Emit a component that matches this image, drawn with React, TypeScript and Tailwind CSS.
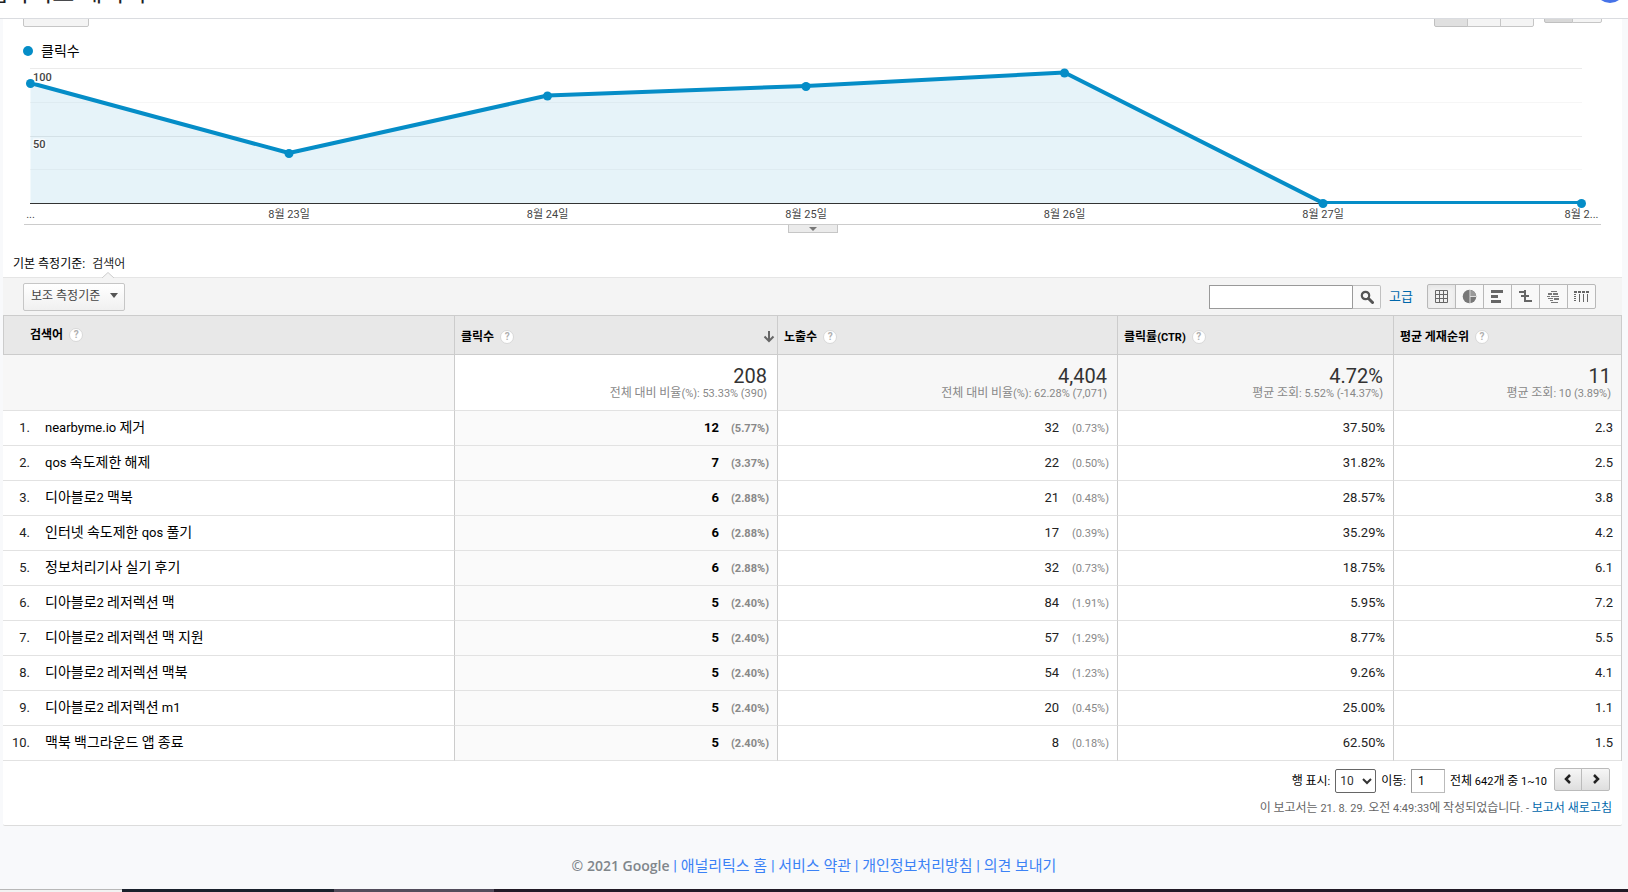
import React, { useState } from 'react';

type Keyword = {
  term: string;
  clicks: number;
  clicksPct: string;
  impressions: number;
  impressionsPct: string;
  ctr: string;
  position: string;
};

const keywords: Keyword[] = [
  { term: 'nearbyme.io 제거', clicks: 12, clicksPct: '5.77%', impressions: 32, impressionsPct: '0.73%', ctr: '37.50%', position: '2.3' },
  { term: 'qos 속도제한 해제', clicks: 7, clicksPct: '3.37%', impressions: 22, impressionsPct: '0.50%', ctr: '31.82%', position: '2.5' },
  { term: '디아블로2 맥북', clicks: 6, clicksPct: '2.88%', impressions: 21, impressionsPct: '0.48%', ctr: '28.57%', position: '3.8' },
  { term: '인터넷 속도제한 qos 풀기', clicks: 6, clicksPct: '2.88%', impressions: 17, impressionsPct: '0.39%', ctr: '35.29%', position: '4.2' },
  { term: '정보처리기사 실기 후기', clicks: 6, clicksPct: '2.88%', impressions: 32, impressionsPct: '0.73%', ctr: '18.75%', position: '6.1' },
  { term: '디아블로2 레저렉션 맥', clicks: 5, clicksPct: '2.40%', impressions: 84, impressionsPct: '1.91%', ctr: '5.95%', position: '7.2' },
  { term: '디아블로2 레저렉션 맥 지원', clicks: 5, clicksPct: '2.40%', impressions: 57, impressionsPct: '1.29%', ctr: '8.77%', position: '5.5' },
  { term: '디아블로2 레저렉션 맥북', clicks: 5, clicksPct: '2.40%', impressions: 54, impressionsPct: '1.23%', ctr: '9.26%', position: '4.1' },
  { term: '디아블로2 레저렉션 m1', clicks: 5, clicksPct: '2.40%', impressions: 20, impressionsPct: '0.45%', ctr: '25.00%', position: '1.1' },
  { term: '맥북 백그라운드 앱 종료', clicks: 5, clicksPct: '2.40%', impressions: 8, impressionsPct: '0.18%', ctr: '62.50%', position: '1.5' },
];

const points = [
  { x: 30.5, y: 83, label: '...' },
  { x: 289, y: 153, label: '8월 23일' },
  { x: 547.5, y: 95.5, label: '8월 24일' },
  { x: 806, y: 86, label: '8월 25일' },
  { x: 1064.5, y: 72.5, label: '8월 26일' },
  { x: 1323, y: 203, label: '8월 27일' },
  { x: 1581.5, y: 203, label: '8월 2...' },
];

const footerLinks = ['애널리틱스 홈', '서비스 약관', '개인정보처리방침', '의견 보내기'];

// Hangul is set one step larger than the Latin text beside it
const Mixed: React.FC<{ text: string; size?: 'sm' | 'md' }> = ({ text, size = 'sm' }) => (
  <span className={size === 'sm' ? 'text-[11px]' : 'text-[13px]'}>
    {text.split(/([가-힣]+)/).map((part, i) =>
      i % 2 ? (
        <span key={i} className={size === 'sm' ? 'text-[12px]' : 'text-[14px]'}>{part}</span>
      ) : (
        part
      )
    )}
  </span>
);

const Help: React.FC = () => (
  <button
    aria-label="도움말"
    className="ml-1.5 size-3.5 shrink-0 rounded-full border border-[#d8d8d8] bg-white text-[10px] leading-3 font-bold text-[#b0b0b0]"
  >
    ?
  </button>
);

const Chart: React.FC = () => {
  const line = points.map((p) => `${p.x},${p.y}`).join(' ');
  return (
    <svg viewBox="3 63 1619 161" className="block h-auto w-full">
      {[68, 136].map((y) => (
        <rect key={y} x="30" y={y} width="1552" height="1" fill="#ebebeb" />
      ))}
      {[102, 169].map((y) => (
        <rect key={y} x="30" y={y} width="1552" height="1" fill="#f6f6f6" />
      ))}
      <polygon points={`30.5,203 ${line} 1581.5,203`} fill="#058dc7" fillOpacity="0.1" />
      <rect x="30" y="203" width="1552" height="1" fill="#333" />
      <clipPath id="plot">
        <rect x="20" y="63" width="1575" height="141" />
      </clipPath>
      <polyline points={line} fill="none" stroke="#058dc7" strokeWidth="4" strokeLinejoin="round" clipPath="url(#plot)" />
      {points.map((p) => (
        <circle key={p.x} cx={p.x} cy={p.y + 0.5} r="4.5" fill="#058dc7" />
      ))}
      <g fontSize="11" fontWeight="500" fill="#444" stroke="#fff" strokeWidth="3" strokeOpacity="0.7" paintOrder="stroke">
        <text x="33" y="81">100</text>
        <text x="33" y="148">50</text>
      </g>
      <g fill="#444" textAnchor="middle">
        {points.map((p) => (
          <text key={p.x} x={p.x} y="218" fontSize="11">{p.label}</text>
        ))}
      </g>
    </svg>
  );
};

const viewIcons = [
  {
    name: '데이터',
    icon: <path d="M1.5 1.5h12v12h-12zM5.5 1.5v12M9.5 1.5v12M1.5 5.5h12M1.5 9.5h12" fill="none" stroke="#666" />,
  },
  {
    name: '비율',
    icon: (
      <>
        <circle cx="7.5" cy="7.5" r="6.8" fill="#777" />
        <path d="M8.5 1.2a6.500 6.500 0 0 1 5.600 6.300H8.500z" fill="#999" />
        <path d="M8 1v13M8 7.500h6" fill="none" stroke="#ddd" />
      </>
    ),
  },
  { name: '실적', icon: <path d="M1 1h12v3H1zM1 6h7v3H1zM1 11h10v3H1z" fill="#666" /> },
  {
    name: '비교',
    icon: <path d="M1 2h6v2H1zM6 1h2v12H6zM8 6h3v2H8zM3 6h4v2H3zM7 11h7v2H7z" fill="#666" />,
  },
  {
    name: '검색어 구름',
    icon: (
      <path
        d="M5 2h6v1H5zM2 4h4v2H2zM7 4h5v2H7zM1 7h3v1H1zM5 7h8v1H5zM2 9h5v1H2zM8 9h5v2H8zM4 11h3v1H4zM5 13h7v1H5z"
        fill="#777"
      />
    ),
  },
  {
    name: '피봇',
    icon: (
      <path
        d="M0 2h3v2H0zM4 2h3v2H4zM8 2h3v2H8zM12 2h3v2h-3zM0 5h2v1H0zM0 7h2v1H0zM0 9h2v1H0zM0 11h2v1H0zM5 5h1v8H5zM9 5h1v8H9zM13 5h1v8h-1z"
        fill="#666"
      />
    ),
  },
];

const summary = [
  { value: '208', note: '전체 대비 비율(%): 53.33% (390)' },
  { value: '4,404', note: '전체 대비 비율(%): 62.28% (7,071)' },
  { value: '4.72%', note: '평균 조회: 5.52% (-14.37%)' },
  { value: '11', note: '평균 조회: 10 (3.89%)' },
];

const Toolbar: React.FC = () => {
  const [view, setView] = useState(0);
  return (
    <div className="flex h-[38px] items-center border-t border-[#e5e5e5] bg-[#f4f4f4] px-5">
      <button className="flex h-7 items-center rounded-xs border border-[#c6c6c6] bg-linear-to-b from-white to-[#f0f0f0] pr-1.5 pb-0.5 pl-[7px] text-[12px] text-[#444]">
        보조 측정기준
        <svg width="8" height="5" className="ml-2.5">
          <path d="M0 0h8L4 5z" fill="#555" />
        </svg>
      </button>
      <form className="ml-auto flex" onSubmit={(e) => e.preventDefault()}>
        <input aria-label="검색" className="h-6 w-36 border border-[#999] bg-white px-1 text-[12px]" />
        <button aria-label="검색 실행" className="-ml-px flex h-6 w-[29px] items-center justify-center rounded-r-xs border border-[#c0c0c0] border-l-[#999] bg-[#f8f8f8]">
          <svg width="14" height="14" fill="none" stroke="#555">
            <circle cx="5.5" cy="5.5" r="3.7" strokeWidth="2.2" />
            <path d="M8.5 8.5l4 4" strokeWidth="3" strokeLinecap="round" />
          </svg>
        </button>
      </form>
      <a href="#advanced" className="ml-2 text-[13px] text-[#0067ab]">고급</a>
      <div className="mr-[6px] ml-3.5 flex">
        {viewIcons.map((v, i) => (
          <button
            key={v.name}
            aria-label={v.name}
            onClick={() => setView(i)}
            className={`-mr-px flex h-[25px] w-[29px] items-center justify-center border border-[#b8b8b8] first:rounded-l-xs last:mr-0 last:rounded-r-xs ${
              view === i ? 'bg-[#f0f0f0] inset-shadow-sm' : 'bg-[#f8f8f8]'
            }`}
          >
            <svg width="15" height="15">{v.icon}</svg>
          </button>
        ))}
      </div>
    </div>
  );
};

const KeywordTable: React.FC = () => (
  <table className="w-full table-fixed border-separate border-spacing-0 border-r border-[#ccc] text-[13px] text-[#222]">
    <colgroup>
      <col className="w-[451px]" />
      <col className="w-[323px]" />
      <col className="w-[340px]" />
      <col className="w-[276px]" />
      <col className="w-[228px]" />
    </colgroup>
    <thead>
      <tr className="h-10 bg-[#e8e8e8] text-left text-black">
        <th className="border-y border-l border-[#ccc] pl-[26px]">
          <div className="flex items-center"><Mixed text="검색어" /><Help /></div>
        </th>
        <th className="border-y border-l border-[#ccc] pt-1 pl-1.5">
          <div className="flex items-center">
            <Mixed text="클릭수" />
            <Help />
            <svg width="12" height="12" className="mr-0.5 ml-auto" fill="none" stroke="#666" strokeWidth="2">
              <path d="M6 0v10M1.5 5.5L6 10L10.5 5.5" />
            </svg>
          </div>
        </th>
        {['노출수', '클릭률(CTR)', '평균 게재순위'].map((name) => (
          <th key={name} className="border-y border-l border-[#ccc] pt-1 pl-1.5">
            <div className="flex items-center"><Mixed text={name} /><Help /></div>
          </th>
        ))}
      </tr>
    </thead>
    <tbody>
      <tr className="h-14 bg-[#f7f7f7]">
        <td className="border-b border-[#e2e2e2]" />
        {summary.map((s, i) => (
          <td
            key={s.value}
            className={`border-b border-l border-b-[#e2e2e2] border-l-[#ccc] pt-0.5 pr-2.5 text-right ${i === 0 ? 'bg-white' : ''}`}
          >
            <div className="text-[20px] leading-5 text-[#333]">{s.value}</div>
            <div className="leading-3.5 text-[#888]"><Mixed text={s.note} /></div>
          </td>
        ))}
      </tr>
      {keywords.map((k, i) => (
        <tr key={k.term} className="h-[35px]">
          <td className="border-b border-[#e2e2e2] pb-0.5 leading-5">
            <span className="inline-block w-[27px] text-right">{i + 1}.</span>
            <span className="ml-[15px] text-black"><Mixed text={k.term} size="md" /></span>
          </td>
          <td className="border-b border-l border-b-[#e2e2e2] border-l-[#ccc] bg-[#fafafa] pr-2 text-right font-bold text-black">
            {k.clicks}
            <span className="inline-block w-[50px] text-[11px] text-[#888]">({k.clicksPct})</span>
          </td>
          <td className="border-b border-l border-b-[#e2e2e2] border-l-[#ccc] pr-2 text-right">
            {k.impressions}
            <span className="inline-block w-[50px] text-[11px] text-[#888]">({k.impressionsPct})</span>
          </td>
          <td className="border-b border-l border-b-[#e2e2e2] border-l-[#ccc] pr-2 text-right">{k.ctr}</td>
          <td className="border-b border-l border-b-[#e2e2e2] border-l-[#ccc] pr-2 text-right">{k.position}</td>
        </tr>
      ))}
    </tbody>
  </table>
);

const Pagination: React.FC = () => (
  <div className="pt-1.5 pb-1.5 text-black">
    <div className="flex items-center justify-end pr-3">
      <label htmlFor="rows" className="mr-[5px]"><Mixed text="행 표시:" /></label>
      <select id="rows" defaultValue="10" className="mt-0.5 h-6 w-[41px] rounded-xs border border-[#666] bg-white text-[12px] text-[#333]">
        <option>10</option>
        <option>25</option>
      </select>
      <label htmlFor="goto" className="mr-[5px] ml-[5px]"><Mixed text="이동:" /></label>
      <input id="goto" defaultValue="1" className="mt-0.5 h-6 w-[34px] border border-[#bbb] border-t-[#999] border-l-[#999] bg-white px-1.5 text-[12px]" />
      <span className="ml-[5px]"><Mixed text="전체 642개 중 1~10" /></span>
      <div className="mb-0.5 ml-[7px] flex">
        <button aria-label="이전" className="flex h-[23px] w-7 items-center justify-center rounded-l-xs border border-[#bbb] bg-linear-to-b from-[#f6f6f6] to-[#dedede]">
          <svg width="8" height="10" fill="none" stroke="#222" strokeWidth="2.5"><path d="M6 1L2 5l4 4" /></svg>
        </button>
        <button aria-label="다음" className="-ml-px flex h-[23px] w-[29px] items-center justify-center rounded-r-xs border border-[#bbb] bg-linear-to-b from-[#f6f6f6] to-[#dedede]">
          <svg width="8" height="10" fill="none" stroke="#222" strokeWidth="2.5"><path d="M2 1l4 4-4 4" /></svg>
        </button>
      </div>
    </div>
    <p className="mt-1 pr-2.5 text-right leading-5 text-[#666]">
      <Mixed text="이 보고서는 21. 8. 29. 오전 4:49:33에 작성되었습니다. - " />
      <a href="#refresh" className="text-[12px] text-[#0067ab]">보고서 새로고침</a>
    </p>
  </div>
);

const App: React.FC = () => {
  return (
    <div className="flex min-h-screen flex-col bg-[#f8f9fb] font-[Roboto,'Noto_Sans_CJK_KR',sans-serif]">
      <header className="flex h-[19px] items-end justify-between overflow-hidden border-b border-[#dadce0] bg-white">
        <h1 className="mb-[7px] -ml-3.5 text-[24px] whitespace-nowrap text-[#202124]">웹사이트 데이터</h1>
        <span className="mr-[3px] mb-[15px] size-[30px] shrink-0 rounded-full bg-[#4673e8]" />
      </header>

      <main className="mr-[6px] ml-[3px] rounded-b-xs border-b border-[#dcdcdc] bg-white">
        <div className="flex h-2 items-end overflow-hidden px-5">
          <button aria-label="탐색기" className="h-7 w-[66px] shrink-0 rounded-xs border border-[#c6c6c6] bg-[#f4f4f4]" />
          <div className="ml-auto flex">
            <button aria-label="일" className="h-7 w-[34px] rounded-l-xs border border-[#c0c0c0] bg-[#e0e0e0]" />
            <button aria-label="주" className="-ml-px h-7 w-[34px] border border-[#c6c6c6] bg-[#f4f4f4]" />
            <button aria-label="월" className="-ml-px h-7 w-[34px] rounded-r-xs border border-[#c6c6c6] bg-[#f4f4f4]" />
          </div>
          <div className="mb-1 ml-2.5 flex">
            <button aria-label="선 차트" className="h-7 w-[29px] rounded-l-xs border border-[#c0c0c0] bg-[#d8d8d8]" />
            <button aria-label="모션 차트" className="-ml-px h-7 w-[30px] rounded-r-xs border border-[#c6c6c6] bg-[#f4f4f4]" />
          </div>
        </div>

        <div className="mt-3 flex h-6 items-center px-5 text-[14px] text-black">
          <span className="mr-2 size-2.5 rounded-full bg-[#058dc7]" />
          클릭수
        </div>
        <Chart />
        <div className="mx-[21px] flex h-[9px] justify-center border-t border-[#ccc]">
          <button aria-label="차트 접기" className="flex h-2 w-[50px] items-center justify-center border border-t-0 border-[#c6c6c6] bg-[#ebebeb]">
            <svg width="8" height="4"><path d="M0 0h8L4 4z" fill="#777" /></svg>
          </button>
        </div>

        <div className="mt-[19px] flex h-[25px] items-center pb-0.5 pl-2.5 text-[12px] text-black">
          기본 측정기준:
          <span className="relative ml-[7px] text-[#222]">
            검색어
            <svg width="12" height="6" className="absolute top-[17px] left-[10px]">
              <path d="M0 6L6 0.5L12 6" fill="#f4f4f4" stroke="#ccc" />
            </svg>
          </span>
        </div>
        <Toolbar />
        <KeywordTable />
        <Pagination />
      </main>

      <footer className="mt-7 text-center text-[15px] leading-6 text-[#3c82f6]">
        <span className="font-['Open_Sans'] text-[14px] font-semibold text-[#80868b]">© 2021 Google</span>
        {footerLinks.map((link) => (
          <React.Fragment key={link}>
            {' | '}
            <a href="#footer">{link}</a>
          </React.Fragment>
        ))}
      </footer>

      <div className="mt-auto flex h-[3px] bg-[#211a26]">
        <div className="w-[122px] border-t border-[#b8b8b8] bg-[#f2f2f2]" />
        <div className="w-[212px] bg-[#1a212c]" />
        <div className="w-40 bg-[#524c5b]" />
      </div>
    </div>
  );
};

export default App;
